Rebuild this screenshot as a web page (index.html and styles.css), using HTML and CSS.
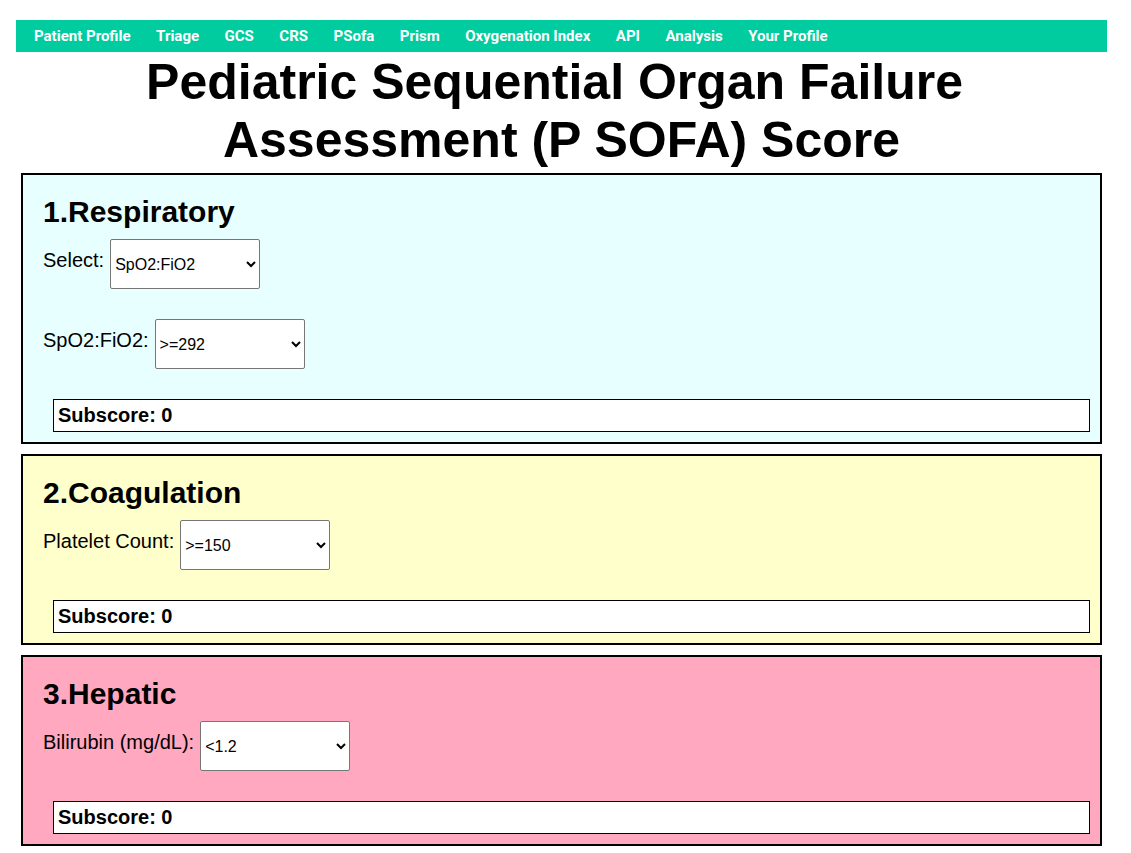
FILE: index.html
```html
<!DOCTYPE html>
<html lang="en">
<head>
<meta charset="utf-8">
<title>Pediatric Sequential Organ Failure Assessment (P SOFA) Score</title>
<link rel="stylesheet" href="styles.css">
</head>
<body>
<div class="page">
  <nav class="topnav">
    <a class="nav-item" href="#">Patient Profile</a>
    <a class="nav-item" href="#">Triage</a>
    <a class="nav-item" href="#">GCS</a>
    <a class="nav-item" href="#">CRS</a>
    <a class="nav-item" href="#">PSofa</a>
    <a class="nav-item" href="#">Prism</a>
    <a class="nav-item" href="#">Oxygenation Index</a>
    <a class="nav-item" href="#">API</a>
    <a class="nav-item" href="#">Analysis</a>
    <a class="nav-item" href="#">Your Profile</a>
  </nav>

  <h1 class="title">Pediatric Sequential Organ Failure Assessment (P SOFA) Score</h1>

  <section class="organ organ-resp">
    <h2 class="organ-title">1.Respiratory</h2>
    <div class="field">
      <label class="field-label" for="resp-type">Select:</label>
      <select class="field-select" id="resp-type">
        <option>SpO2:FiO2</option>
        <option>PaO2:FiO2</option>
      </select>
    </div>
    <div class="field">
      <label class="field-label" for="resp-val">SpO2:FiO2:</label>
      <select class="field-select" id="resp-val">
        <option>&gt;=292</option>
        <option>264-291</option>
        <option>221-264</option>
        <option>148-220</option>
        <option>&lt;148</option>
      </select>
    </div>
    <div class="subscore">Subscore: 0</div>
  </section>

  <section class="organ organ-coag">
    <h2 class="organ-title">2.Coagulation</h2>
    <div class="field">
      <label class="field-label" for="plt">Platelet Count:</label>
      <select class="field-select" id="plt">
        <option>&gt;=150</option>
        <option>100-149</option>
        <option>50-99</option>
        <option>20-49</option>
        <option>&lt;20</option>
      </select>
    </div>
    <div class="subscore">Subscore: 0</div>
  </section>

  <section class="organ organ-hep">
    <h2 class="organ-title">3.Hepatic</h2>
    <div class="field">
      <label class="field-label" for="bili">Bilirubin (mg/dL):</label>
      <select class="field-select" id="bili">
        <option>&lt;1.2</option>
        <option>1.2-1.9</option>
        <option>2.0-5.9</option>
        <option>6.0-11.9</option>
        <option>&gt;=12</option>
      </select>
    </div>
    <div class="subscore">Subscore: 0</div>
  </section>
</div>
</body>
</html>
```

FILE: styles.css
```css
html, body {
  margin: 0;
  padding: 0;
  background: #ffffff;
}

body {
  font-family: "Liberation Sans", Arial, sans-serif;
  color: #000000;
}

.page {
  margin: 0 24px 0 16px;
  padding-top: 20px;
}

.topnav {
  display: flex;
  align-items: center;
  gap: 25.5px;
  background: #00cc9f;
  padding: 8px 18px;
  height: 16px;
}

.nav-item {
  font-family: Roboto, "Liberation Sans", sans-serif;
  font-weight: 700;
  font-size: 15px;
  line-height: 16px;
  color: #ffffff;
  text-decoration: none;
  white-space: nowrap;
}

.title {
  margin: 1px 0 4px;
  font-size: 50px;
  font-weight: 700;
  text-align: center;
  line-height: normal;
  white-space: break-spaces;
}

.organ {
  margin: 0 5px 10px;
  border: 2px solid #000000;
  padding: 20px 20px 10px;
}

.organ-resp { background: #e8ffff; }
.organ-coag { background: #ffffcc; }
.organ-hep  { background: #ffa8c0; }

.organ-title {
  margin: 0 0 10px;
  font-size: 30px;
  font-weight: 700;
  line-height: 34px;
}

.field {
  display: flex;
  align-items: flex-start;
  gap: 6px;
}

.field + .field {
  margin-top: 30px;
}

.field-label {
  font-size: 20px;
  line-height: 23px;
  padding-top: 10px;
}

.field-select {
  width: 150px;
  height: 50px;
  font-family: "Liberation Sans", Arial, sans-serif;
  font-size: 16px;
  background: #ffffff;
  color: #000000;
  border: 1px solid #767676;
  border-radius: 2px;
  margin: 0;
}

.subscore {
  margin: 30px -10px 0 10px;
  border: 1px solid #000000;
  background: #ffffff;
  padding: 4px 4px;
  font-size: 20px;
  font-weight: 700;
  line-height: 23px;
}
```
